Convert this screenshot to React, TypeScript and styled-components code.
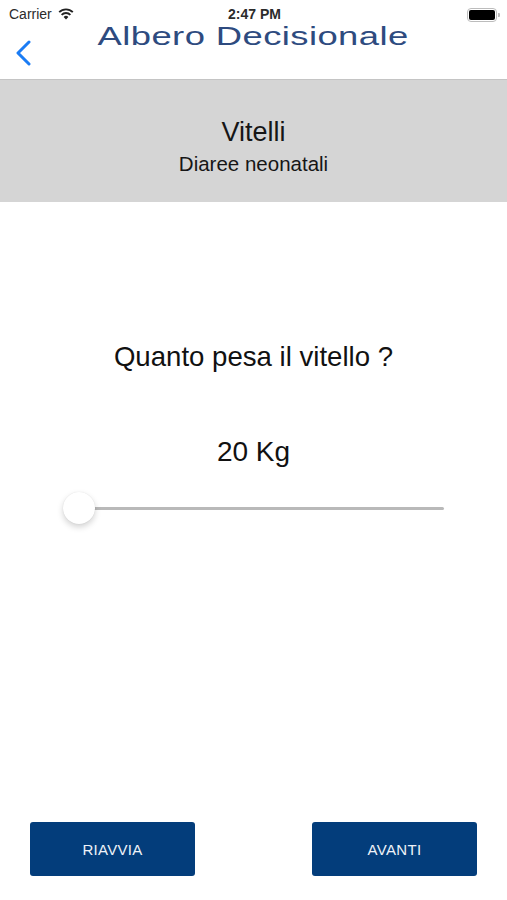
import React from "react";
import styled, { createGlobalStyle } from "styled-components";

const GlobalStyle = createGlobalStyle`
  html, body {
    margin: 0;
    padding: 0;
    background: #ffffff;
  }
  body {
    font-family: "Liberation Sans", Arial, sans-serif;
    color: #111111;
  }
`;

const Page = styled.div`
  display: flex;
  flex-direction: column;
  min-height: 100vh;
  background: #ffffff;
`;

const StatusBar = styled.div`
  height: 20px;
  display: grid;
  grid-template-columns: 1fr auto 1fr;
  align-items: end;
  padding: 0 7px 0 9px;
  font-size: 14px;
  line-height: 16px;
  color: #2b2b2b;
`;

const Carrier = styled.div`
  display: flex;
  align-items: center;
  gap: 6px;
`;

const Clock = styled.div`
  font-weight: bold;
  font-size: 14px;
`;

const Battery = styled.div`
  justify-self: end;
  align-self: center;
  margin-top: 8px;
  display: flex;
  align-items: center;
`;

const BatteryBody = styled.div`
  width: 26px;
  height: 10px;
  border: 1px solid #bcbcbc;
  border-radius: 4px;
  padding: 1px;
  box-sizing: content-box;
  display: flex;
`;

const BatteryFill = styled.div`
  flex: 1;
  background: #000000;
  border-radius: 2px;
`;

const BatteryNub = styled.div`
  width: 2px;
  height: 4px;
  background: #bcbcbc;
  border-radius: 0 1px 1px 0;
  margin-left: 1px;
`;

const NavBar = styled.div`
  height: 59px;
  display: grid;
  grid-template-columns: 60px 1fr 60px;
  border-bottom: 1px solid #c4c4c4;
`;

const BackButton = styled.div`
  padding-left: 15px;
  margin-top: 20px;
  align-self: start;
  line-height: 0;
`;

const Title = styled.div`
  align-self: start;
  justify-self: center;
  margin-top: 1px;
  font-size: 26px;
  line-height: 30px;
  letter-spacing: 0.3px;
  color: #2e4b7f;
  white-space: nowrap;
  transform: scaleX(1.4);
`;

const Band = styled.div`
  height: 122px;
  box-sizing: border-box;
  padding-top: 36px;
  background: #d5d5d5;
  display: flex;
  flex-direction: column;
  align-items: center;
  color: #161616;
`;

const BandTitle = styled.div`
  font-size: 27px;
  line-height: 32px;
`;

const BandSubtitle = styled.div`
  margin-top: 4px;
  font-size: 20.5px;
  line-height: 24px;
`;

const Body = styled.div`
  display: flex;
  flex-direction: column;
  align-items: center;
  padding-top: 139px;
`;

const Question = styled.div`
  font-size: 27.6px;
  line-height: 32px;
  color: #111111;
`;

const Value = styled.div`
  margin-top: 63px;
  font-size: 28px;
  line-height: 32px;
  color: #111111;
`;

const Slider = styled.div`
  align-self: stretch;
  margin: 24px 63px 0 63px;
  height: 32px;
  position: relative;
  display: flex;
  align-items: center;
`;

const Track = styled.div`
  flex: 1;
  height: 3px;
  background: #b9b9b9;
  border-radius: 2px;
  margin-left: 16px;
`;

const Thumb = styled.div`
  position: absolute;
  top: 0;
  width: 32px;
  height: 32px;
  border-radius: 50%;
  background: #ffffff;
  box-shadow: 0 3px 6px rgba(0, 0, 0, 0.18), 0 0 1px rgba(0, 0, 0, 0.12);
`;

const Footer = styled.div`
  margin-top: auto;
  display: flex;
  justify-content: space-between;
  padding: 0 30px 24px 30px;
`;

const Button = styled.button`
  width: 165px;
  height: 54px;
  border: none;
  border-radius: 3px;
  background: #033d7b;
  color: #eef2f8;
  font-family: "Liberation Sans", Arial, sans-serif;
  font-size: 15px;
  letter-spacing: 0.3px;
  cursor: pointer;
`;

const Wifi = () => (
  <svg width="16" height="12" viewBox="0 0 16 12">
    <path d="M8 11.5 L5.6 8.9 A3.4 3.4 0 0 1 10.4 8.9 Z" fill="#222" />
    <path
      d="M3.6 6.8 A6.2 6.2 0 0 1 12.4 6.8"
      stroke="#222"
      strokeWidth="1.9"
      fill="none"
    />
    <path
      d="M1.2 4.2 A9.6 9.6 0 0 1 14.8 4.2"
      stroke="#222"
      strokeWidth="1.9"
      fill="none"
    />
  </svg>
);

const Chevron = () => (
  <svg width="18" height="26" viewBox="0 0 18 26">
    <path
      d="M14 2 L3 13 L14 24"
      stroke="#1b7cf4"
      strokeWidth="3"
      fill="none"
      strokeLinecap="round"
      strokeLinejoin="round"
    />
  </svg>
);

export default function App() {
  const weight = 20;
  const thumbPos = 0;

  return (
    <>
      <GlobalStyle />
      <Page>
        <StatusBar>
          <Carrier>
            Carrier
            <Wifi />
          </Carrier>
          <Clock>2:47 PM</Clock>
          <Battery>
            <BatteryBody>
              <BatteryFill />
            </BatteryBody>
            <BatteryNub />
          </Battery>
        </StatusBar>
        <NavBar>
          <BackButton>
            <Chevron />
          </BackButton>
          <Title>Albero Decisionale</Title>
          <div />
        </NavBar>
        <Band>
          <BandTitle>Vitelli</BandTitle>
          <BandSubtitle>Diaree neonatali</BandSubtitle>
        </Band>
        <Body>
          <Question>Quanto pesa il vitello ?</Question>
          <Value>{weight} Kg</Value>
          <Slider>
            <Track />
            <Thumb style={{ left: `${thumbPos}%` }} />
          </Slider>
        </Body>
        <Footer>
          <Button>RIAVVIA</Button>
          <Button>AVANTI</Button>
        </Footer>
      </Page>
    </>
  );
}
